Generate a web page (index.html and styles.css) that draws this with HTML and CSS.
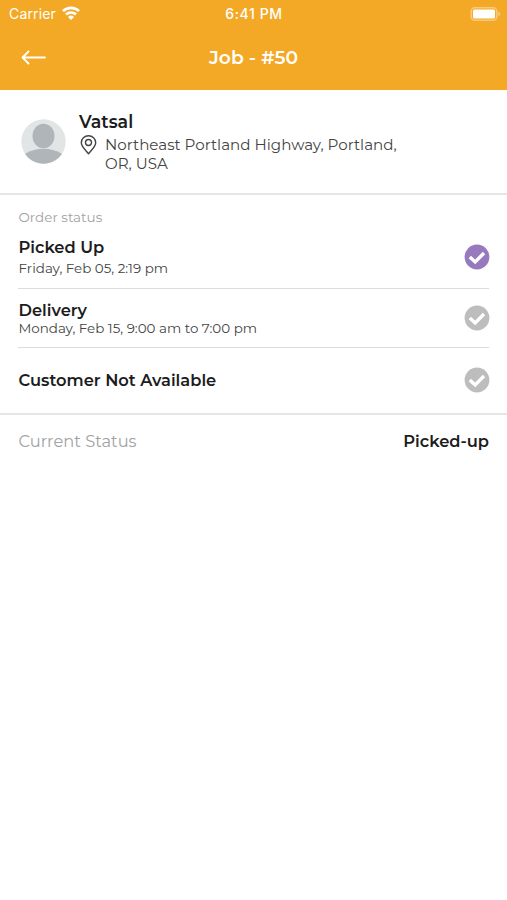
FILE: index.html
```html
<!DOCTYPE html>
<html lang="en">
<head>
<meta charset="utf-8">
<title>Job - #50</title>
<link rel="stylesheet" href="styles.css">
</head>
<body>
<header class="top">
  <div class="statusbar">
    <div class="carrier"><span class="carrier-name">Carrier</span>
      <svg class="wifi" width="18" height="14" viewBox="0 0 18 14" fill="none" stroke="#fff" stroke-width="2.7"><path d="M1 5.1a11.5 11.5 0 0 1 16 0M4 8.5a7.2 7.2 0 0 1 10 0"/><path d="M9 14 6 11a4.3 4.3 0 0 1 6 0z" fill="#fff" stroke="none"/></svg>
    </div>
    <span class="time">6:41 PM</span>
    <svg class="battery" width="31" height="14" viewBox="0 0 31 14"><rect x="1.25" y=".75" width="25.5" height="12.5" rx="3.5" fill="none" stroke="#fff" stroke-opacity=".4" stroke-width="1.5"/><rect x="3" y="2.5" width="22" height="9" rx="1.5" fill="#fff"/><path d="M28.3 4.8v4.4q2-.6 2-2.2t-2-2.2z" fill="#fff" fill-opacity=".4"/></svg>
  </div>
  <div class="navbar">
    <svg class="back" width="26" height="16" viewBox="0 0 26 16" fill="none" stroke="#fff" stroke-width="1.8" stroke-linecap="round" stroke-linejoin="round"><path d="M24 7.5H1.5M7.5 1.5l-6 6 6 6"/></svg>
    <h1 class="title">Job - #50</h1>
  </div>
</header>
<main>
  <section class="customer">
    <svg class="avatar" width="45" height="45" viewBox="0 0 45 45"><defs><clipPath id="disc"><circle cx="22.5" cy="22.5" r="22.2"/></clipPath></defs><g clip-path="url(#disc)"><path fill="#e1e5e6" d="M0 0h45v45H0z"/><ellipse cx="22.5" cy="17" rx="11" ry="12.2" fill="#afb5b8"/><ellipse cx="22.5" cy="44" rx="24" ry="14.2" fill="#afb5b8"/></g></svg>
    <div class="details">
      <h2 class="name">Vatsal</h2>
      <div class="address">
        <svg class="pin" width="17" height="20" viewBox="0 0 17 20" fill="none" stroke="#444" stroke-width="1.4" stroke-linejoin="round"><path d="M8.5 18.8C6 15.6 1.3 11.6 1.3 7.8a7.2 7 0 0 1 14.4 0c0 3.8-4.7 7.8-7.2 11z"/><circle cx="8.5" cy="7.5" r="3"/></svg>
        <p class="lines">Northeast Portland Highway, Portland,<br>OR, USA</p>
      </div>
    </div>
  </section>
  <section class="order">
    <p class="label">Order status</p>
    <div class="step picked">
      <div><h3>Picked Up</h3><p>Friday, Feb 05, 2:19 pm</p></div>
      <svg class="check on" width="26" height="26" viewBox="0 0 26 26"><circle cx="13" cy="13" r="12.4"/><path d="m5.8 12.9 5.4 5L20 9"/></svg>
    </div>
    <div class="step delivery">
      <div><h3>Delivery</h3><p>Monday, Feb 15, 9:00 am to 7:00 pm</p></div>
      <svg class="check" width="26" height="26" viewBox="0 0 26 26"><circle cx="13" cy="13" r="12.4"/><path d="m5.8 12.9 5.4 5L20 9"/></svg>
    </div>
    <div class="step missing">
      <h3>Customer Not Available</h3>
      <svg class="check" width="26" height="26" viewBox="0 0 26 26"><circle cx="13" cy="13" r="12.4"/><path d="m5.8 12.9 5.4 5L20 9"/></svg>
    </div>
  </section>
  <section class="current"><span class="current-label">Current Status</span><strong class="current-value">Picked-up</strong></section>
</main>
</body>
</html>
```
FILE: styles.css
```css
* { box-sizing: border-box; margin: 0; padding: 0; }
body { min-height: 900px; background: #fff; color: #1c1c1c; font-family: Montserrat, Inter, sans-serif; white-space: nowrap; }
svg { display: block; flex: none; }
.top { height: 90px; background: #f3a926; color: #fff; }
.statusbar { height: 27px; display: grid; grid-template-columns: 1fr auto 1fr; align-items: center; padding: 0 6px 0 9px; font-family: Inter, sans-serif; }
.carrier { display: flex; align-items: center; gap: 6px; font-size: 14px; line-height: 27px; }
.carrier-name { letter-spacing: .15px; width: 47px; }
.wifi { margin-top: -2px; }
.time { font-size: 14px; font-weight: 500; letter-spacing: .6px; line-height: 27px; margin-left: -2px; }
.battery { justify-self: end; }
.navbar { height: 61px; display: grid; grid-template-columns: 1fr auto 1fr; align-items: center; padding: 0 21px; }
.title { font-size: 18.7px; font-weight: 600; }
.customer { height: 105px; display: flex; padding: 29px 21px 0; gap: 13px; border-bottom: 2px solid #e5e5e5; }
.details { margin-top: -9px; }
.name { font-size: 17.4px; font-weight: 600; line-height: 24px; }
.address { display: flex; gap: 8px; padding: 1px 0 0 1px; }
.lines { font-size: 15.1px; line-height: 18.5px; color: #444; padding-top: 1px; }
.order { padding: 12px 18px 0; height: 220px; border-bottom: 2px solid #e5e5e5; }
.label { font-size: 13.5px; line-height: 20px; color: #a2a2a2; padding-left: .5px; }
.step { display: flex; justify-content: space-between; align-items: center; padding-left: .5px; }
.step + .step { border-top: 1px solid #dcdcdc; }
.step h3 { font-size: 16.3px; font-weight: 600; line-height: 22px; }
.step p { font-size: 13.45px; line-height: 18px; color: #444; }
.picked { height: 61px; }
.picked > div { margin-top: -2px; }
.picked h3 { margin-bottom: 1px; }
.picked .check { margin-top: -2px; }
.delivery { height: 59px; }
.delivery p { line-height: 14px; }
.delivery > div { margin-top: -3px; }
.missing { height: 66px; }
.missing h3 { margin-top: -2px; }
.missing .check { margin-top: -1px; }
.check { margin-right: -1px; fill: #bdbdbd; }
.check.on { fill: #9779bd; }
.check path { fill: none; stroke: #fff; stroke-width: 3.4; }
.current { display: flex; justify-content: space-between; padding: 14px 18px 0 18.5px; line-height: 24px; font-size: 16.3px; }
.current-label { color: #a2a2a2; }
.current-value { font-weight: 600; }
```
